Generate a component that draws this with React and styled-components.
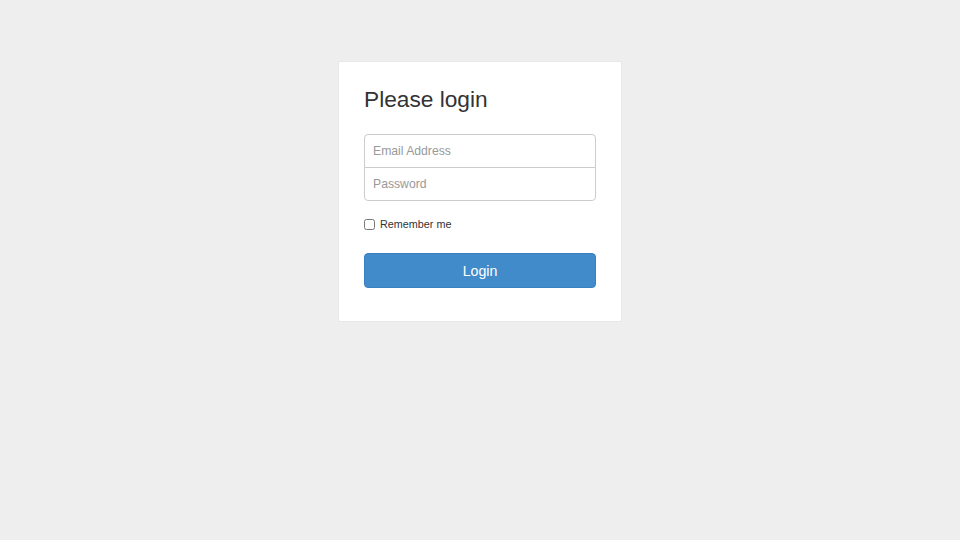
import styled, { createGlobalStyle } from "styled-components";

const Global = createGlobalStyle`
  html, body {
    margin: 0;
    padding: 0;
    background: #eeeeee;
    font-family: "Liberation Sans", Arial, sans-serif;
    color: #333;
  }
`;

const Page = styled.div`
  display: flex;
  justify-content: center;
  align-items: flex-start;
  padding-top: 61px;
  height: 540px;
  box-sizing: border-box;
`;

const Card = styled.div`
  width: 284px;
  box-sizing: border-box;
  background: #fff;
  border: 1px solid #e8e8e8;
  border-radius: 2px;
  padding: 23px 25px 33px;
`;

const Title = styled.h3`
  margin: 0;
  font-size: 22.7px;
  font-weight: 400;
  line-height: 28px;
  color: #333;
`;

const Fields = styled.div`
  margin-top: 21px;
  display: flex;
  flex-direction: column;
`;

const Input = styled.input`
  height: 34px;
  box-sizing: border-box;
  border: 1px solid #ccc;
  padding: 6px 8px;
  font-family: "Liberation Sans", Arial, sans-serif;
  font-size: 12.2px;
  color: #555;
  outline: none;
  border-radius: ${(p) => (p.$first ? "4px 4px 0 0" : "0 0 4px 4px")};
  margin-top: ${(p) => (p.$first ? "0" : "-1px")};

  &::placeholder {
    color: #999;
  }
`;

const Check = styled.label`
  display: flex;
  align-items: center;
  gap: 3px;
  margin-top: 16px;
  height: 14px;
  line-height: 14px;
  font-size: 10.8px;
  color: #333;

  & input {
    margin: 0 2px 0 0;
    width: 11px;
    height: 11px;
  }
`;

const Button = styled.button`
  display: block;
  margin-top: 22px;
  width: 100%;
  height: 35px;
  border: 1px solid #3a7fc0;
  border-radius: 4px;
  background: #428bca;
  color: #fff;
  font-family: "Liberation Sans", Arial, sans-serif;
  font-size: 14.2px;
  cursor: pointer;
`;

export default function App() {
  return (
    <>
      <Global />
      <Page>
        <Card>
          <Title>Please login</Title>
          <Fields>
            <Input $first placeholder="Email Address" />
            <Input type="password" placeholder="Password" />
          </Fields>
          <Check>
            <input type="checkbox" />
            Remember me
          </Check>
          <Button>Login</Button>
        </Card>
      </Page>
    </>
  );
}
